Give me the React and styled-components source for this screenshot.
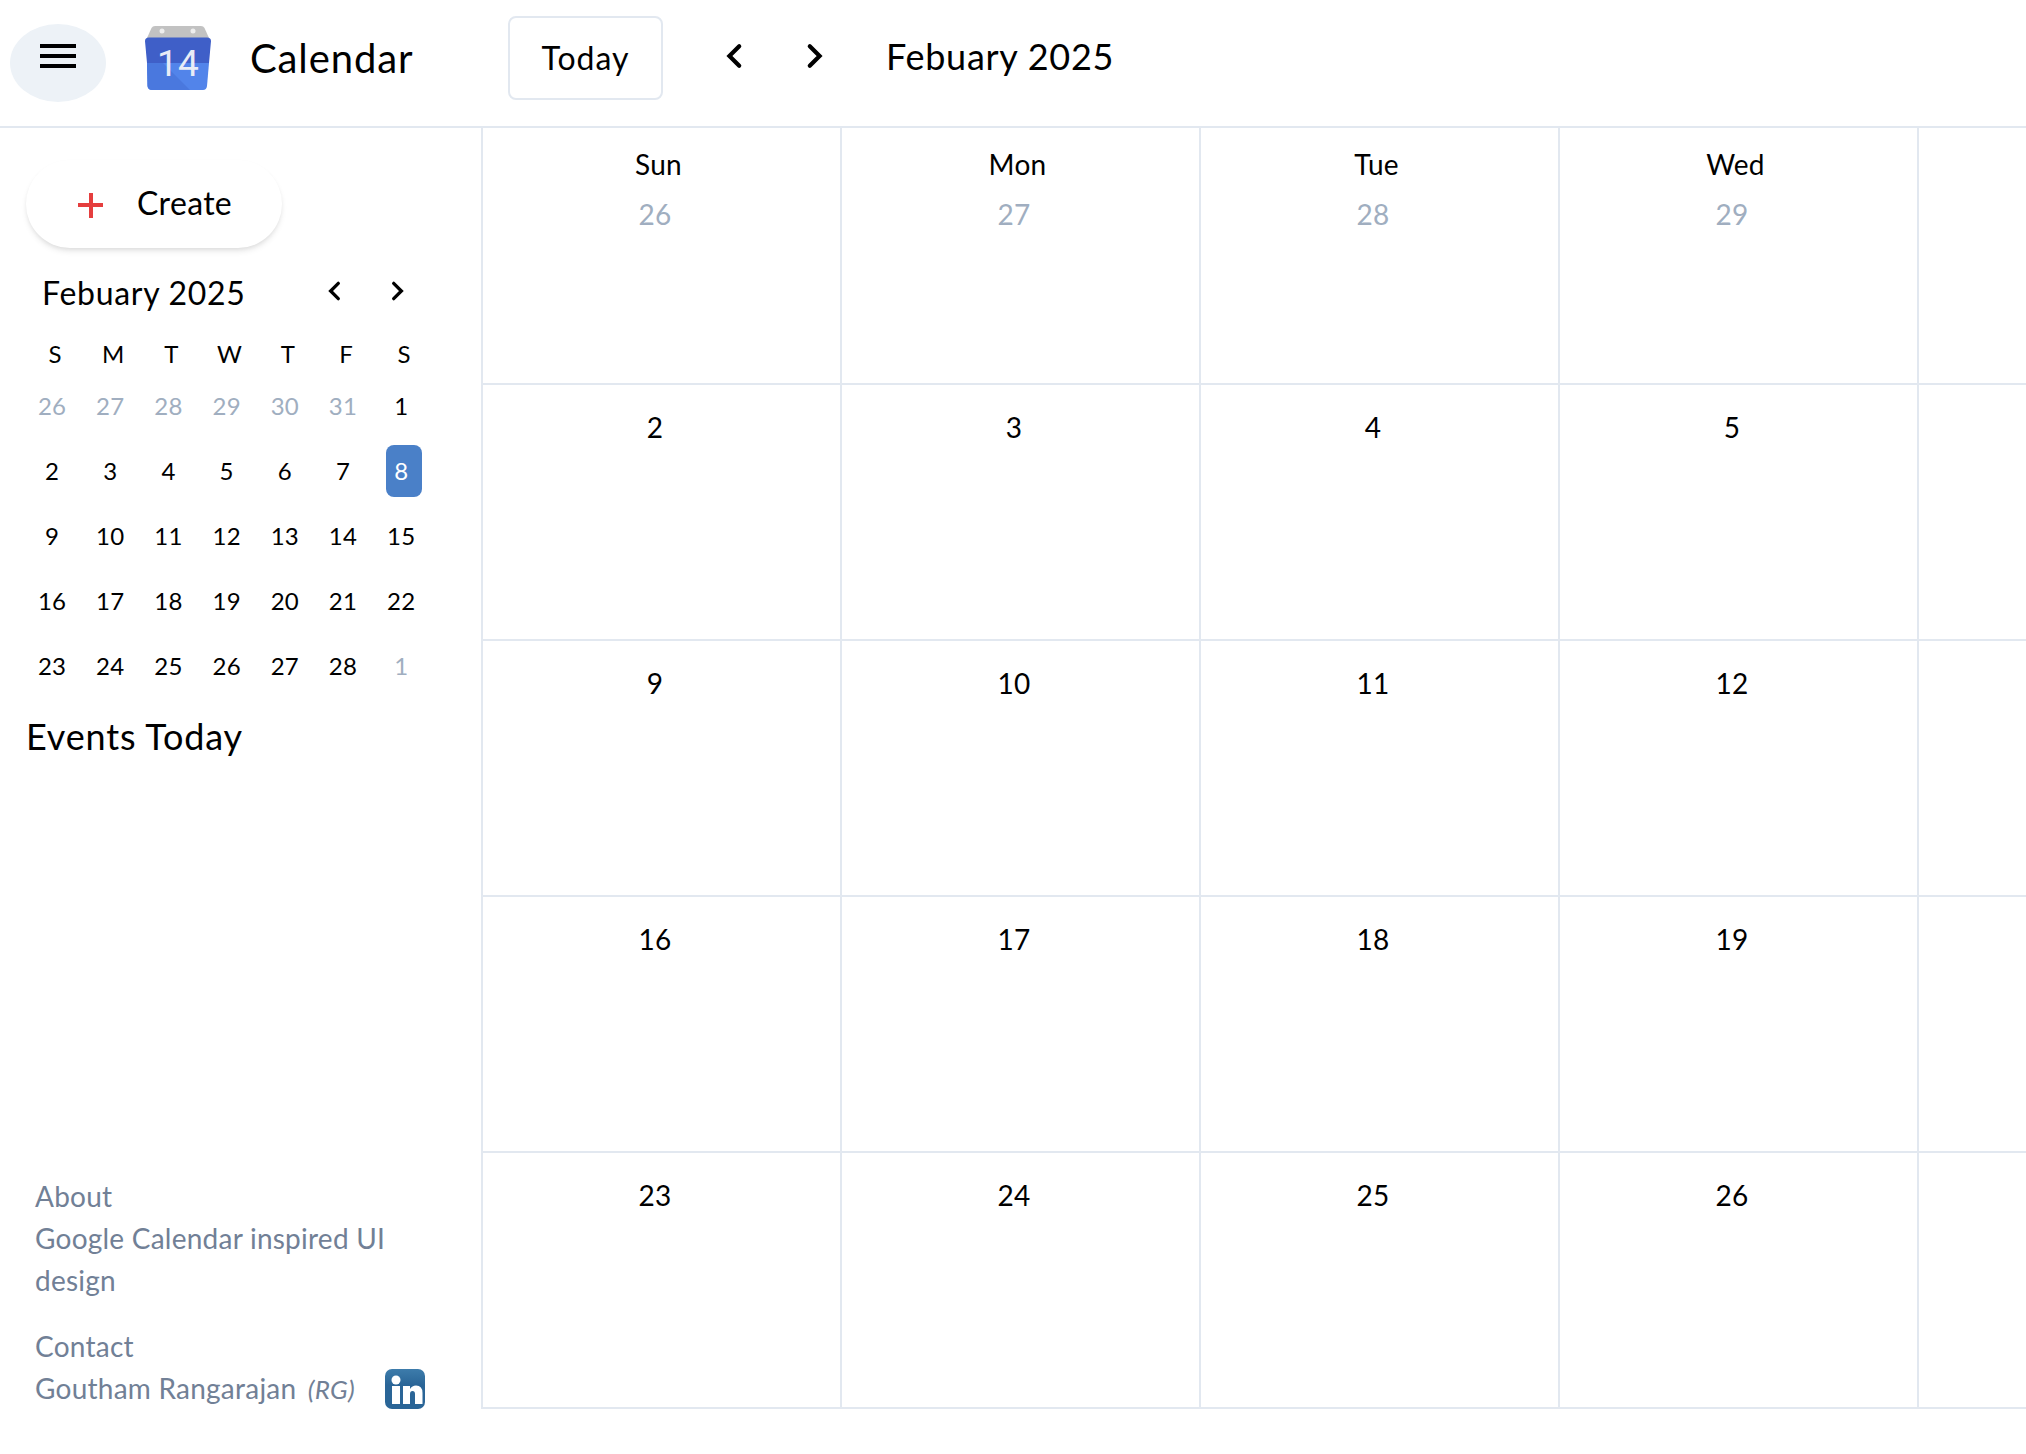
import React from 'react'
import styled, { createGlobalStyle } from 'styled-components'

const FONT = `Lato, "Noto Sans", sans-serif`

const COLUMN_DAYS = ['Sun', 'Mon', 'Tue', 'Wed', '']
const MINI_DAYS = ['S', 'M', 'T', 'W', 'T', 'F', 'S']

// 35 days of the mini month, Jan 26 through Mar 1
const MONTH = [
  26, 27, 28, 29, 30, 31, 1,
  2, 3, 4, 5, 6, 7, 8,
  9, 10, 11, 12, 13, 14, 15,
  16, 17, 18, 19, 20, 21, 22,
  23, 24, 25, 26, 27, 28, 1,
].map((day, i) => ({ day, muted: i < 6 || i === 34, today: i === 13 }))

// the big grid runs off the right edge, only four columns and a bit of Thu show
const WEEKS = [0, 7, 14, 21, 28].map(start => MONTH.slice(start, start + 5))

function Chevron({ dir, size = 20 }) {
  return (
    <svg width={size} height={size} viewBox="0 0 20 20" fill="none">
      <path
        d={dir === 'left' ? 'M13 3l-7 7 7 7' : 'M7 3l7 7-7 7'}
        stroke="#000"
        strokeWidth="3"
        strokeLinecap="round"
      />
    </svg>
  )
}

function CalendarLogo() {
  return (
    <svg width="66" height="64" viewBox="0 0 66 64">
      <path d="M2 12L6.500 2Q7.500 0 10 0H56Q58.500 0 59.500 2L64 12Z" fill="#c2c2c2" />
      <circle cx="17" cy="5" r="2.500" fill="#eeeeee" />
      <circle cx="48" cy="5" r="2.500" fill="#eeeeee" />
      <path d="M4 11.500H62Q66 11.500 66 15L64 37H2L0 15Q0 11.500 4 11.500Z" fill="#3f5fc8" />
      <path d="M2 37H64L62 60Q61.500 64 58 64H7Q3 64 2.500 60Z" fill="#5284ea" />
      <path d="M2 37H18L45 64H7Q3 64 2.500 60Z" fill="#4a78de" />
      <text x="33" y="50" textAnchor="middle" fontFamily="Roboto, sans-serif" fontSize="37" fill="#e8ecf6">14</text>
    </svg>
  )
}

function LinkedInIcon() {
  return (
    <svg width="40" height="40" viewBox="0 0 40 40">
      <defs>
        <linearGradient id="gloss" x1="0" y1="0" x2="0" y2="1">
          <stop offset="0" stopColor="#3d7cab" />
          <stop offset="0.4" stopColor="#2a6597" />
        </linearGradient>
      </defs>
      <rect width="40" height="40" rx="7" fill="url(#gloss)" />
      <circle cx="11" cy="11" r="4.500" fill="#fff" />
      <rect x="7" y="17" width="8" height="18" fill="#fff" />
      <path d="M18 17h7v3q2-3.500 6-3.500q6.500 0 6.500 7.500v11h-7.500V25q0-3-2.500-3q-2.500 0-2.500 3v10h-7Z" fill="#fff" />
    </svg>
  )
}

function App() {
  return (
    <>
      <GlobalStyle />
      <Page>
        <Header>
          <MenuButton>
            <MenuBar />
            <MenuBar />
            <MenuBar />
          </MenuButton>
          <Logo>
            <CalendarLogo />
          </Logo>
          <AppTitle>Calendar</AppTitle>
          <TodayButton>Today</TodayButton>
          <HeaderNav>
            <Chevron dir="left" size={28} />
            <Chevron dir="right" size={28} />
          </HeaderNav>
          <MonthTitle>Febuary 2025</MonthTitle>
        </Header>

        <Body>
          <Sidebar>
            <CreateButton>
              <PlusSign />
              <CreateLabel>Create</CreateLabel>
            </CreateButton>

            <MiniHeader>
              <MiniTitle>Febuary 2025</MiniTitle>
              <MiniNav>
                <Chevron dir="left" size={22} />
                <Chevron dir="right" size={22} />
              </MiniNav>
            </MiniHeader>

            <MiniGrid>
              {MINI_DAYS.map((d, i) => (
                <MiniWeekday key={i}>{d}</MiniWeekday>
              ))}
              {MONTH.map((cell, i) => (
                <MiniCell key={i}>
                  <MiniDay $muted={cell.muted} $today={cell.today}>{cell.day}</MiniDay>
                </MiniCell>
              ))}
            </MiniGrid>

            <EventsTitle>Events Today</EventsTitle>

            <Footer>
              <FooterBlock>
                About
                <br />
                Google Calendar inspired UI design
              </FooterBlock>
              <FooterBlock>
                Contact
                <ContactRow>
                  <span>
                    Goutham Rangarajan <Initials>(RG)</Initials>
                  </span>
                  <LinkedInIcon />
                </ContactRow>
              </FooterBlock>
            </Footer>
          </Sidebar>

          <MonthGrid>
            {WEEKS.map((week, w) =>
              week.map((cell, i) => (
                <DayCell key={`${w}-${i}`} $first={w === 0} $last={i === 4}>
                  {i < 4 && w === 0 && <DayName>{COLUMN_DAYS[i]}</DayName>}
                  {i < 4 && <DayNumber $muted={w === 0} $first={w === 0}>{cell.day}</DayNumber>}
                </DayCell>
              ))
            )}
          </MonthGrid>
        </Body>
      </Page>
    </>
  )
}

export default App

const GlobalStyle = createGlobalStyle`
  html, body {
    margin: 0;
    padding: 0;
    background: #fff;
  }
  * {
    box-sizing: border-box;
  }
`

const Page = styled.div`
  height: 100vh;
  display: flex;
  flex-direction: column;
  overflow: hidden;
  color: #000;
  font-family: ${FONT};
  letter-spacing: 0.015em;
`

const Header = styled.header`
  flex: none;
  height: 128px;
  display: flex;
  align-items: center;
  padding: 0 0 14px 10px;
  border-bottom: 2px solid #e2e8f0;
`

const MenuButton = styled.div`
  flex: none;
  width: 96px;
  height: 78px;
  margin-top: 14px;
  border-radius: 50%;
  background: #edf2f7;
  display: flex;
  flex-direction: column;
  justify-content: flex-start;
  align-items: center;
  gap: 6px;
  padding-top: 20px;
`

const MenuBar = styled.span`
  width: 36px;
  height: 4px;
  background: #000;
`

const Logo = styled.div`
  flex: none;
  width: 66px;
  height: 64px;
  margin: 4px 39px 0 39px;
  svg {
    display: block;
  }
`

const AppTitle = styled.h1`
  flex: none;
  width: 258px;
  margin: 4px 0 0;
  font-size: 40px;
  font-weight: 400;
  letter-spacing: 0.022em;
`

const TodayButton = styled.button`
  flex: none;
  width: 155px;
  height: 84px;
  margin-top: 4px;
  background: #fff;
  border: 2px solid #e2e8f0;
  border-radius: 8px;
  color: #000;
  font-family: inherit;
  font-size: 32px;
  font-weight: 400;
  letter-spacing: 0.03em;
  padding: 0 0 2px;
`

const HeaderNav = styled.div`
  flex: none;
  width: 107px;
  margin-left: 58px;
  display: flex;
  justify-content: space-between;
  svg {
    display: block;
  }
`

const MonthTitle = styled.div`
  flex: none;
  margin-left: 58px;
  font-size: 36px;
  font-weight: 400;
  letter-spacing: 0.02em;
`

const Body = styled.div`
  flex: 1;
  min-height: 0;
  display: flex;
`

const Sidebar = styled.aside`
  flex: none;
  width: 481px;
  height: 1326px;
  display: flex;
  flex-direction: column;
  padding: 32px 0 44px 26px;
`

const CreateButton = styled.button`
  flex: none;
  width: 256px;
  height: 88px;
  display: flex;
  align-items: center;
  padding: 0 0 0 52px;
  gap: 34px;
  background: #fff;
  border: 0;
  border-radius: 44px;
  box-shadow: 0 4px 6px -1px rgba(0, 0, 0, 0.1), 0 2px 4px -1px rgba(0, 0, 0, 0.06);
  color: #000;
  font-family: inherit;
  font-size: 32px;
  font-weight: 400;
  letter-spacing: 0.01em;
`

const CreateLabel = styled.span`
  padding-bottom: 4px;
`

const PlusSign = styled.span`
  flex: none;
  width: 25px;
  height: 25px;
  margin-top: 2px;
  background:
    linear-gradient(#e53e3e, #e53e3e) center / 100% 4px no-repeat,
    linear-gradient(#e53e3e, #e53e3e) center / 4px 100% no-repeat;
`

const MiniHeader = styled.div`
  width: 408px;
  margin-top: 25px;
  display: flex;
  align-items: center;
  justify-content: space-between;
  padding-left: 16px;
`

const MiniTitle = styled.div`
  font-size: 32px;
  font-weight: 400;
  letter-spacing: 0.022em;
`

const MiniNav = styled.div`
  width: 84px;
  margin: -3px 26px 0 0;
  display: flex;
  justify-content: space-between;
  svg {
    display: block;
  }
`

const MiniGrid = styled.div`
  width: 408px;
  margin-top: 18px;
  display: grid;
  grid-template-columns: repeat(7, 58.2px);
  grid-auto-rows: 65px;
  align-items: center;
`

const MiniWeekday = styled.div`
  height: 36px;
  margin-top: -18px;
  text-align: center;
  font-size: 24px;
  line-height: 36px;
`

const MiniCell = styled.div`
  display: flex;
  justify-content: center;
  margin-top: -44px;
`

const MiniDay = styled.div`
  width: 36px;
  height: 52px;
  display: flex;
  align-items: center;
  justify-content: center;
  padding-right: 6px;
  font-size: 24px;
  border-radius: 8px;
  color: ${props => (props.$today ? '#fff' : props.$muted ? '#a0aec0' : '#000')};
  background: ${props => (props.$today ? '#4a80c8' : 'transparent')};
`

const EventsTitle = styled.h2`
  margin: -6px 0 0;
  font-size: 36px;
  font-weight: 400;
  letter-spacing: 0.023em;
`

const Footer = styled.footer`
  margin-top: auto;
  width: 399px;
  padding-left: 9px;
  color: #718096;
  font-size: 28px;
  line-height: 42px;
`

const FooterBlock = styled.div`
  & + & {
    margin-top: 24px;
  }
`

const ContactRow = styled.div`
  display: flex;
  align-items: center;
  justify-content: space-between;
  svg {
    display: block;
    flex: none;
  }
`

const Initials = styled.i`
  margin-left: 4px;
  font-size: 26px;
`

const MonthGrid = styled.main`
  flex: 1;
  min-width: 0;
  display: grid;
  align-self: flex-start;
  grid-template-columns: repeat(4, 359px) 1fr;
  grid-template-rows: 257px repeat(4, 256px);
  border-left: 2px solid #e2e8f0;
`

const DayCell = styled.div`
  display: flex;
  flex-direction: column;
  align-items: center;
  padding-top: ${props => (props.$first ? '18px' : '24px')};
  border-right: ${props => (props.$last ? '0' : '2px solid #e2e8f0')};
  border-bottom: 2px solid #e2e8f0;
`

const DayName = styled.div`
  padding-right: 6px;
  font-size: 28px;
  line-height: 36px;
`

const DayNumber = styled.div`
  padding-right: 13px;
  margin-top: ${props => (props.$first ? '14px' : '0')};
  font-size: 28px;
  line-height: 36px;
  color: ${props => (props.$muted ? '#a0aec0' : '#000')};
`
